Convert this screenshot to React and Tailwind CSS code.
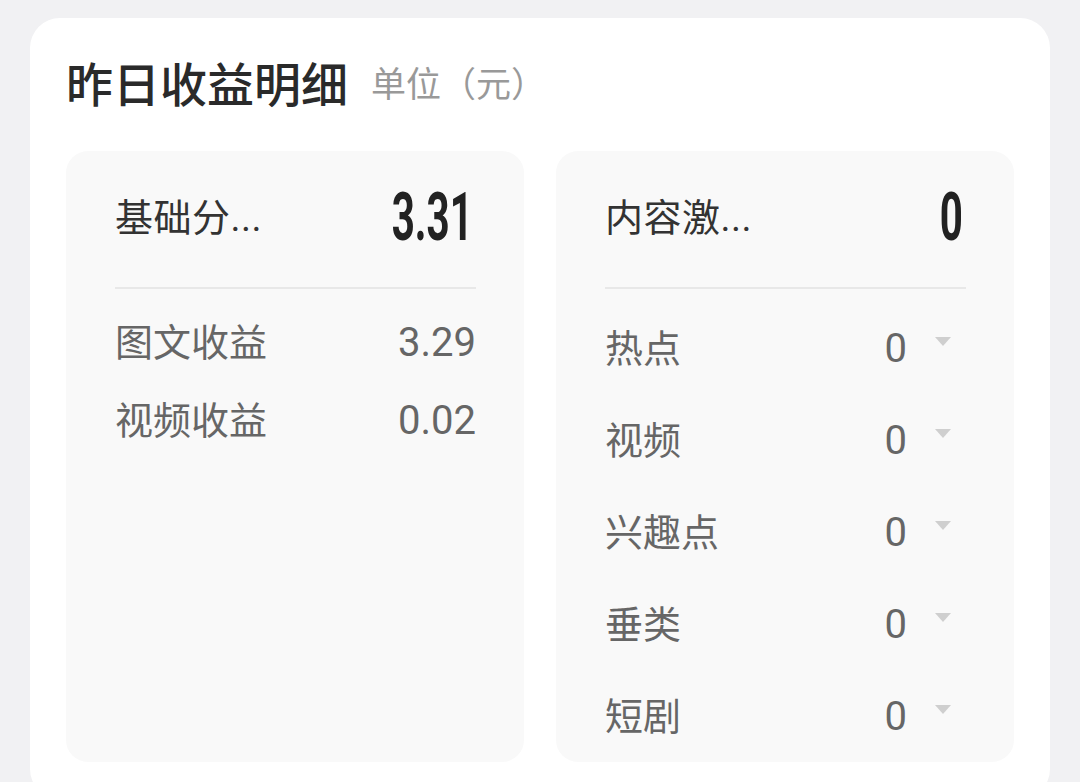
const FONT = "font-['Roboto','Noto_Sans_CJK_SC',sans-serif]";

const LEFT_ROWS = [
    { label: "图文收益", value: "3.29" },
    { label: "视频收益", value: "0.02" },
];

const RIGHT_ROWS = ["热点", "视频", "兴趣点", "垂类", "短剧"];

function Caret() {
    return (
        <svg width="16" height="9" viewBox="0 0 16 9" className="mt-[8px] ml-[28px] shrink-0">
            <path d="M0 0 L16 0 L8 9 Z" fill="#cfcfcf" />
        </svg>
    );
}

function PanelHeader({ label, value }) {
    return (
        <>
            <div className="flex items-center justify-between h-[54px] mt-[40px]">
                <span className="text-[38px] leading-none text-[#333333] tracking-[0.5px]">{label}</span>
                <span className="inline-block origin-right scale-x-[0.61] text-[66px] leading-none font-bold text-[#222222] mr-[3px]">
                    {value}
                </span>
            </div>
            <div className="mt-[42px] h-[2px] bg-[#e8e8e8]" />
        </>
    );
}

export default function App() {
    return (
        <div className={`h-[782px] overflow-hidden bg-[#f1f1f3] pt-[18px] px-[30px] ${FONT}`}>

            {/* CARD */}

            <div className="h-[781px] rounded-[30px] bg-white px-[36px]">

                {/* TITLE */}

                <div className="flex items-center pt-[44px] h-[92px]">
                    <h1 className="text-[47px] leading-[48px] font-medium text-[#2a2a2a]">
                        昨日收益明细
                    </h1>
                    <span className="ml-[23px] text-[35px] leading-[48px] text-[#999999]">
                        单位（元）
                    </span>
                </div>

                {/* PANELS */}

                <div className="mt-[41px] grid grid-cols-2 gap-[32px]">

                    <div className="h-[611px] rounded-[22px] bg-[#f9f9f9] pl-[49px] pr-[48px]">
                        <PanelHeader label="基础分..." value="3.31" />
                        <div className="mt-[15px]">
                            {LEFT_ROWS.map((row) => (
                                <div key={row.label} className="flex items-center justify-between h-[78px]">
                                    <span className="text-[38px] leading-none text-[#666666]">{row.label}</span>
                                    <span className="text-[40px] leading-none text-[#666666]">{row.value}</span>
                                </div>
                            ))}
                        </div>
                    </div>

                    <div className="h-[611px] rounded-[22px] bg-[#f9f9f9] pl-[49px] pr-[48px]">
                        <PanelHeader label="内容激..." value="0" />
                        <div className="mt-[14px] mr-[15px]">
                            {RIGHT_ROWS.map((label) => (
                                <div key={label} className="flex items-center justify-between h-[92px]">
                                    <span className="text-[38px] leading-none text-[#666666]">{label}</span>
                                    <div className="flex items-start">
                                        <span className="text-[40px] leading-none text-[#666666]">0</span>
                                        <Caret />
                                    </div>
                                </div>
                            ))}
                        </div>
                    </div>

                </div>
            </div>
        </div>
    );
}
